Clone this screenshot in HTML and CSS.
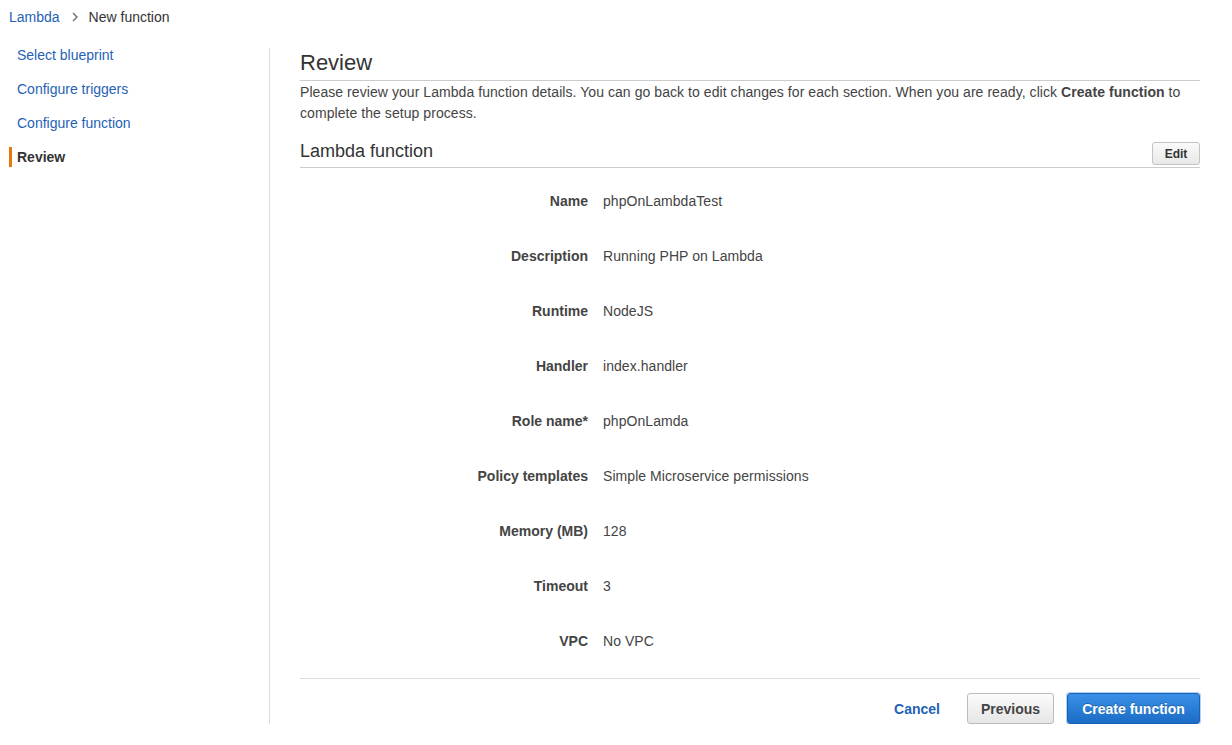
FILE: index.html
```html
<!DOCTYPE html>
<html lang="en">
<head>
    <meta charset="UTF-8">
    <title>New function - Review</title>
    <link rel="stylesheet" href="styles.css">
</head>
<body>
    <div class="breadcrumb">
        <a href="#">Lambda</a>
        <svg class="chevron" width="8" height="10" viewBox="0 0 8 10"><path d="M2 1l4 4-4 4" fill="none" stroke="#666" stroke-width="1.3"/></svg>
        <span>New function</span>
    </div>

    <div class="layout">
        <nav class="sidebar">
            <a class="step" href="#">Select blueprint</a>
            <a class="step" href="#">Configure triggers</a>
            <a class="step" href="#">Configure function</a>
            <span class="step active">Review</span>
        </nav>
        <div class="divider"></div>

        <main class="main">
            <h1>Review</h1>
            <p class="intro">Please review your Lambda function details. You can go back to edit changes for each section. When you are ready, click <b>Create function</b> to complete the setup process.</p>

            <div class="section-header">
                <h2>Lambda function</h2>
                <button class="btn btn-small">Edit</button>
            </div>

            <dl class="details">
                <div class="row"><dt>Name</dt><dd>phpOnLambdaTest</dd></div>
                <div class="row"><dt>Description</dt><dd>Running PHP on Lambda</dd></div>
                <div class="row"><dt>Runtime</dt><dd>NodeJS</dd></div>
                <div class="row"><dt>Handler</dt><dd>index.handler</dd></div>
                <div class="row"><dt>Role name*</dt><dd>phpOnLamda</dd></div>
                <div class="row"><dt>Policy templates</dt><dd>Simple Microservice permissions</dd></div>
                <div class="row"><dt>Memory (MB)</dt><dd>128</dd></div>
                <div class="row"><dt>Timeout</dt><dd>3</dd></div>
                <div class="row"><dt>VPC</dt><dd>No VPC</dd></div>
            </dl>

            <div class="footer">
                <a class="cancel" href="#">Cancel</a>
                <button class="btn btn-default">Previous</button>
                <button class="btn btn-primary">Create function</button>
            </div>
        </main>
    </div>
</body>
</html>
```

FILE: styles.css
```css
body {
    font-family: "Liberation Sans", Arial, sans-serif;
    font-size: 14px;
    color: #444;
    margin: 0;
    padding: 0;
    background: #ffffff;
}

a {
    color: #1f62b5;
    text-decoration: none;
}

.breadcrumb {
    height: 34px;
    line-height: 34px;
    padding-left: 9px;
    display: flex;
    align-items: center;
}

.breadcrumb .chevron {
    margin: 0 10px 0 11px;
}

.breadcrumb span {
    color: #333;
}

.layout {
    display: flex;
    padding-top: 11px;
}

.sidebar {
    width: 260px;
    padding-left: 9px;
    display: flex;
    flex-direction: column;
}

.step {
    display: block;
    line-height: 20px;
    margin-bottom: 14px;
    padding-left: 5px;
    border-left: 3px solid transparent;
}

.step.active {
    border-left-color: #e8780c;
    color: #333;
    font-weight: bold;
}

.divider {
    width: 1px;
    background: #ddd;
    margin-top: 3px;
}

.main {
    width: 900px;
    margin-left: 30px;
}

h1 {
    margin: 0;
    padding: 3px 0 2px;
    font-size: 22px;
    line-height: 30px;
    font-weight: normal;
    color: #333;
    border-bottom: 1px solid #ccc;
}

.intro {
    margin: 0;
    padding-top: 1px;
    line-height: 21px;
    letter-spacing: 0.06px;
}

.section-header {
    display: flex;
    justify-content: space-between;
    align-items: center;
    padding: 15px 0 4px;
    border-bottom: 1px solid #ccc;
}

.section-header .btn-small {
    align-self: flex-end;
    margin-bottom: -2px;
}

h2 {
    margin: 0;
    font-size: 18px;
    line-height: 24px;
    font-weight: normal;
    color: #333;
}

.details {
    margin: 5px 0 0;
}

.row {
    display: grid;
    grid-template-columns: 288px 1fr;
    column-gap: 15px;
    padding: 18px 0 17px;
    line-height: 20px;
}

dt {
    text-align: right;
    font-weight: bold;
}

dd {
    margin: 0;
    letter-spacing: 0.06px;
}

.footer {
    margin-top: 10px;
    border-top: 1px solid #ddd;
    padding-top: 14px;
    display: flex;
    justify-content: flex-end;
    align-items: center;
}

.cancel {
    font-weight: bold;
    margin-right: 27px;
}

.btn {
    font-family: "Liberation Sans", Arial, sans-serif;
    font-weight: bold;
    border-radius: 3px;
    cursor: pointer;
}

.btn-small {
    height: 23px;
    width: 48px;
    padding: 0;
    font-size: 12px;
    color: #333;
    background: linear-gradient(#fafafa, #e8e8e8);
    border: 1px solid #c4c4c4;
}

.btn-default {
    height: 31px;
    width: 87px;
    font-size: 14px;
    color: #444;
    background: linear-gradient(#fbfbfb, #e6e6e6);
    border: 1px solid #bbb;
    margin-right: 13px;
}

.btn-primary {
    height: 31px;
    width: 133px;
    font-size: 14px;
    color: #fff;
    background: linear-gradient(#3a90e6, #1b6cc6);
    border: 1px solid #1a62b3;
    box-shadow: 0 0 0 1px rgba(110, 170, 240, 0.55);
    text-shadow: 0 -1px 0 rgba(0, 0, 0, 0.25);
}
```
